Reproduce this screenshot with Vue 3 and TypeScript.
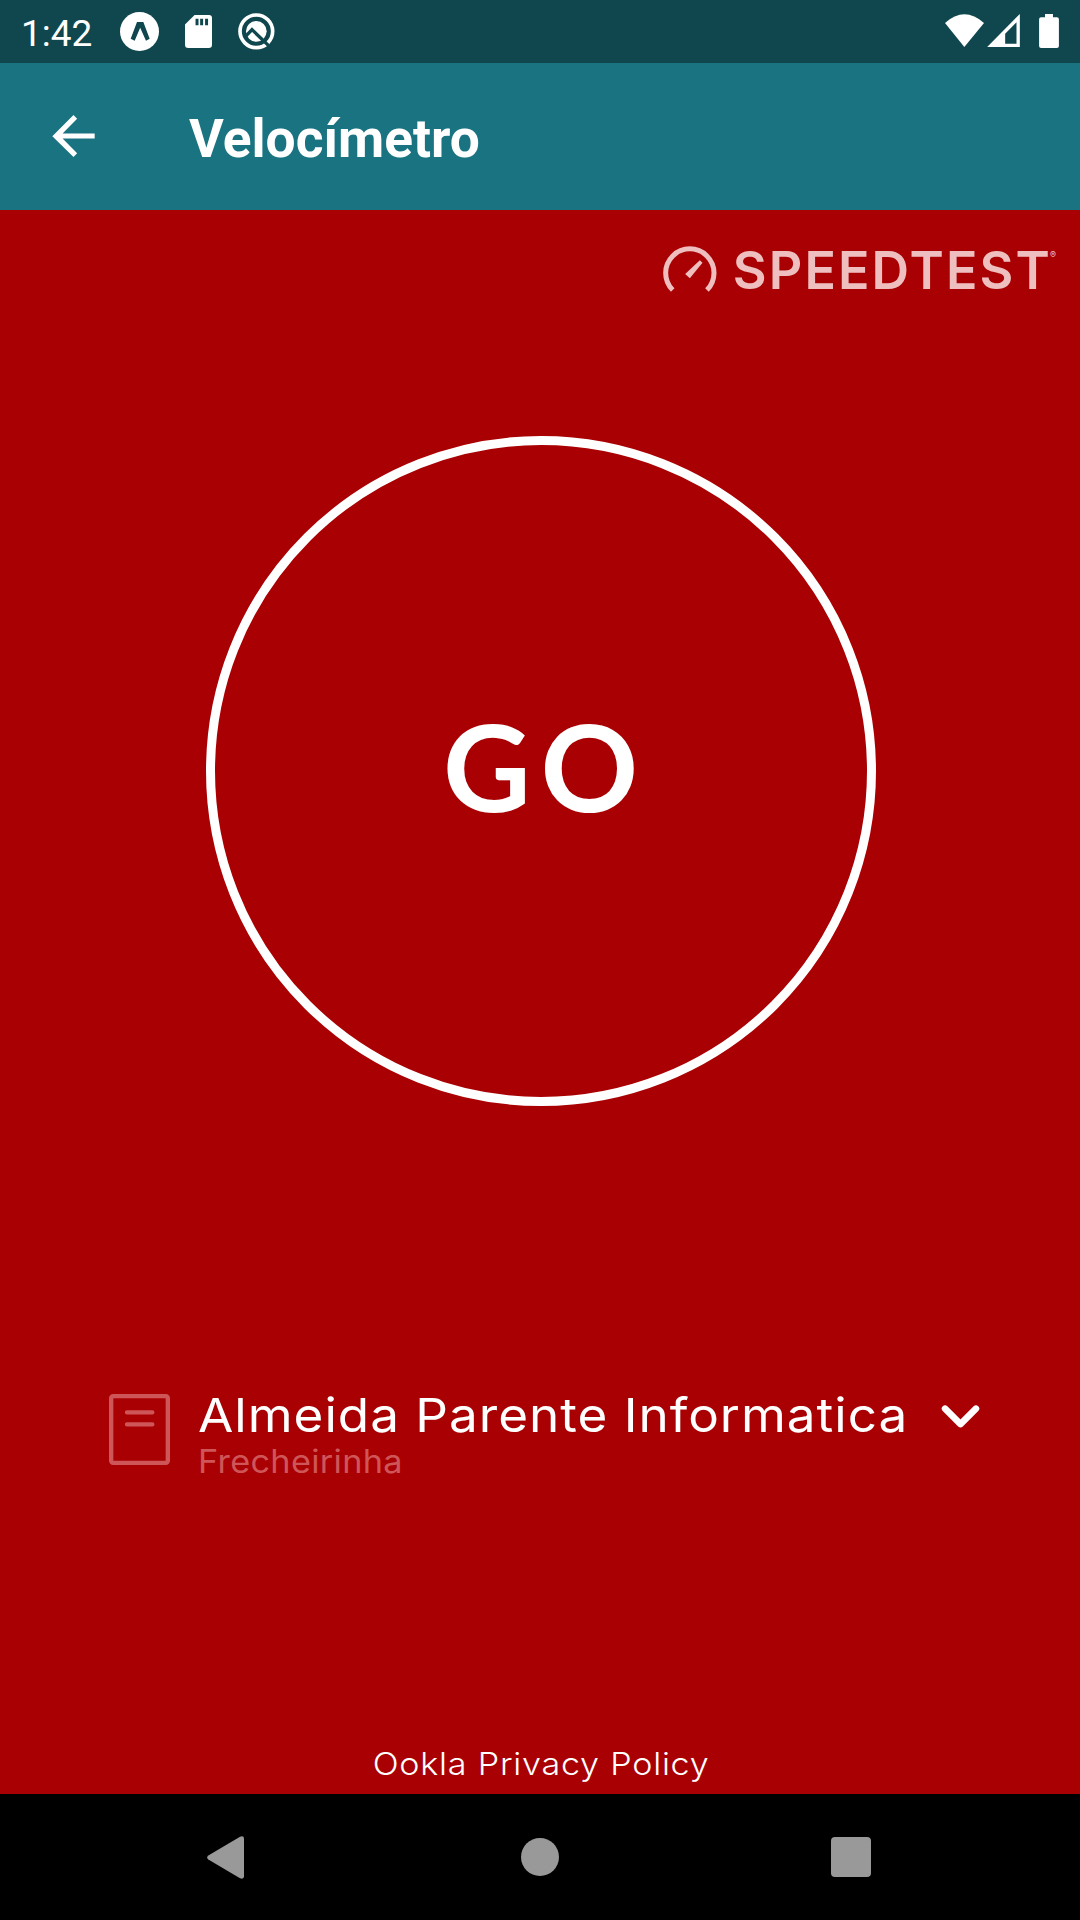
<script setup lang="ts">
import { ref } from 'vue'

interface Server {
  provider: string
  city: string
}

const title = 'Velocímetro'
const clock = '1:42'
const server = ref<Server>({ provider: 'Almeida Parente Informatica', city: 'Frecheirinha' })
</script>

<template>
  <div class="screen">
    <header class="status">
      <span class="clock">{{ clock }}</span>
      <div class="notifications">
        <svg class="n-expo" viewBox="360 36 117 117">
          <circle cx="418.5" cy="94.5" r="58.5" fill="#fff" />
          <path d="M411 66H430L449 116L438 122L420.500 83L404 122L392 116Z" fill="#10464e" />
        </svg>
        <svg class="n-sd" viewBox="553 45 82 100">
          <path d="M582 45H626Q635 45 635 54V135Q635 145 625 145H563Q553 145 553 135V74Z" fill="#fff" />
          <path d="M585 56h9v20h-9zM599 56h9v20h-9zM614 56h9v20h-9z" fill="#10464e" />
        </svg>
        <svg class="n-q" viewBox="713 39 111 111">
          <circle cx="768" cy="94" r="49" fill="none" stroke="#fff" stroke-width="11" />
          <circle cx="768" cy="94" r="31" fill="#fff" />
          <path d="M735 110L755 89L804 136" fill="none" stroke="#10464e" stroke-width="10" />
        </svg>
      </div>
      <div class="system">
        <svg class="s-wifi" viewBox="75 41 117 99">
          <path d="M75 68Q133 16 192 68L133 140Z" fill="#fff" />
        </svg>
        <svg class="s-cell" viewBox="202 42 98 99">
          <path fill-rule="evenodd" d="M300 42V141H202ZM290 67L256 101V131H290Z" fill="#fff" />
        </svg>
        <svg class="s-battery" viewBox="357 41 60 103">
          <path d="M375 41H399V51H411Q417 51 417 57V138Q417 144 411 144H363Q357 144 357 138V57Q357 51 363 51H375Z" fill="#fff" />
        </svg>
      </div>
    </header>

    <div class="appbar">
      <svg class="back" viewBox="157 165 128 127">
        <path d="M285 221V236H188L232 281L221 292L157 229L221 165L232 176L188 221Z" fill="#fff" />
      </svg>
      <h1>{{ title }}</h1>
    </div>

    <main>
      <div class="brand">
        <svg class="gauge" viewBox="65 77 161 138">
          <path d="M93.7 209.3A72.5 72.5 0 1 1 196.3 209.3" fill="none" stroke="#efbfc0" stroke-width="15" />
          <path d="M175 120L183 127L145 174L131 161Z" fill="#efbfc0" />
        </svg>
        <span class="wordmark">SPEEDTEST</span>
        <span class="reg">®</span>
      </div>

      <button class="go" type="button"><span>GO</span></button>

      <div class="server">
        <svg class="host" viewBox="57 73 183 213">
          <rect x="63.5" y="79.5" width="170" height="200" rx="6" fill="none" stroke="#cf5658" stroke-width="13" />
          <path d="M111 128H187M111 164H187" stroke="#cf5658" stroke-width="13" stroke-linecap="round" />
        </svg>
        <div class="names">
          <span class="provider">{{ server.provider }}</span>
          <span class="city">{{ server.city }}</span>
        </div>
        <svg class="chevron" viewBox="1202 103 116 70">
          <path d="M1213 114L1260 161L1307 114" fill="none" stroke="#fff" stroke-width="20" stroke-linecap="round" stroke-linejoin="round" />
        </svg>
      </div>

      <a class="privacy">Ookla Privacy Policy</a>
    </main>

    <nav>
      <svg class="nav-back" viewBox="80 137 112 128">
        <path d="M180 138Q192 134 192 144V258Q192 268 180 264L84 207Q77 201 84 195Z" fill="#999" />
      </svg>
      <span class="nav-home"></span>
      <span class="nav-recent"></span>
    </nav>
  </div>
</template>

<style>
body {
  margin: 0;
}
</style>

<style scoped>
.screen {
  width: 1080px;
  height: 1920px;
  display: flex;
  flex-direction: column;
  overflow: hidden;
  background: #a90003;
  color: #fff;
  font-family: Inter, "Liberation Sans", sans-serif;
}
svg {
  display: block;
  flex: none;
}
.status {
  height: 63px;
  flex: none;
  display: flex;
  background: #10464e;
}
.clock {
  width: 99px;
  margin-left: 21px;
  font: 400 37px/44px Roboto, sans-serif;
  margin-top: 11.5px;
}
.notifications,
.system {
  display: flex;
  align-items: flex-start;
}
.n-expo { width: 39px; height: 39px; margin-top: 12px; }
.n-sd { width: 27px; height: 33px; margin: 15px 0 0 25.5px; }
.n-q { width: 37px; height: 37px; margin: 13px 0 0 26px; }
.system { margin-left: auto; margin-right: 21px; }
.s-wifi { width: 39px; height: 33px; margin-top: 14px; }
.s-cell { width: 33px; height: 33px; margin: 14px 0 0 3px; }
.s-battery { width: 20px; height: 34px; margin: 14px 0 0 19px; }

.appbar {
  height: 147px;
  flex: none;
  display: flex;
  align-items: center;
  background: #1a7381;
}
.back { width: 43px; height: 42px; margin: 0 0 1px 52px; }
h1 {
  margin: 4px 0 0 94px;
  font: 700 53.3px/64px Roboto, sans-serif;
}

main {
  height: 1584px;
  flex: none;
  display: flex;
  flex-direction: column;
}
.brand {
  display: flex;
  height: 64px;
  margin: 28px 24px 0 0;
  justify-content: flex-end;
  align-items: flex-start;
  color: #efbfc0;
}
.gauge { width: 54px; height: 46px; margin: 8px 16px 0 0; }
.wordmark {
  margin-top: 1px;
  font-size: 52px;
  line-height: 64px;
  font-weight: 600;
  letter-spacing: 2.1px;
}
.reg { font-size: 9px; line-height: 12px; margin: 11px 0 0 -2px; }

.go {
  width: 670px;
  height: 670px;
  box-sizing: border-box;
  margin: 134px 0 1px 206px;
  padding: 0 0 10px 9px;
  border: 9px solid #fff;
  border-radius: 50%;
  background: none;
  color: #fff;
  display: flex;
  align-items: center;
  justify-content: center;
  font: 700 121px/140px Lato, sans-serif;
  letter-spacing: 9.7px;
}
.server {
  display: flex;
  align-items: flex-start;
  height: 110px;
  margin: 277px 0 0 109px;
}
.host { width: 61px; height: 71px; margin-top: 10px; }
.names {
  width: 742px;
  margin-left: 28px;
  display: flex;
  flex-direction: column;
  align-items: flex-start;
  white-space: nowrap;
}
.provider {
  font-size: 47px;
  line-height: 62px;
  letter-spacing: 0.9px;
  transform: scaleX(1.09);
  transform-origin: left;
}
.city {
  margin-top: 1px;
  font-size: 32px;
  line-height: 30px;
  letter-spacing: 0.3px;
  color: #cf5658;
  transform: scaleX(1.07);
  transform-origin: left;
}
.chevron { width: 39px; height: 23px; margin-top: 21px; margin-left: 1px; }
.privacy {
  align-self: center;
  margin: auto 0 11px 3px;
  font-size: 31px;
  line-height: 38px;
  font-weight: 300;
  letter-spacing: 0.7px;
  transform: scaleX(1.1);
}

nav {
  height: 126px;
  flex: none;
  display: flex;
  align-items: center;
  background: #000;
}
.nav-back { width: 37px; height: 43px; margin-left: 207px; }
.nav-home {
  width: 38px;
  height: 38px;
  margin-left: 277px;
  border-radius: 50%;
  background: #999;
}
.nav-recent {
  width: 40px;
  height: 40px;
  margin-left: 272px;
  border-radius: 4px;
  background: #999;
}
</style>
